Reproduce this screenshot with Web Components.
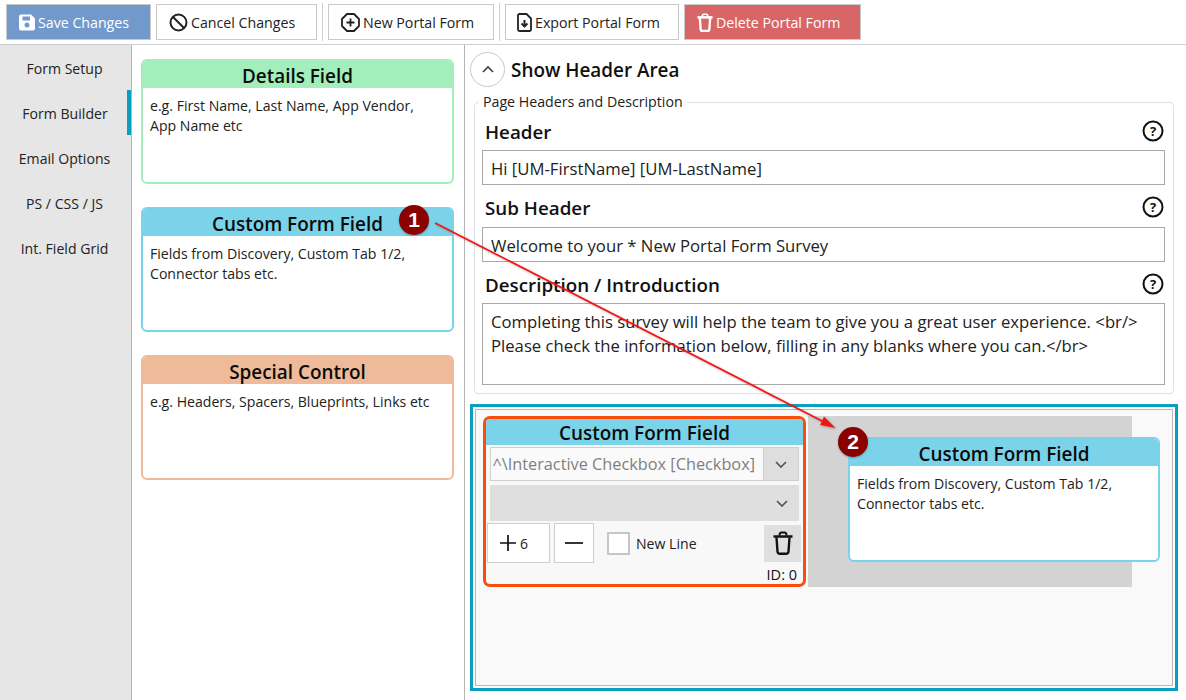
<!DOCTYPE html>
<html><head><meta charset="utf-8">
<style>
html,body{margin:0;padding:0;background:#fff}
body{width:1186px;height:700px;overflow:hidden;font-family:"Open Sans","Noto Sans",sans-serif;color:#111}
</style></head><body>
<app-root></app-root>
<script>
const trash=(w,h,s)=>`<svg width="${w}" height="${h}" viewBox="0 0 20 24" fill="none" stroke="currentColor" stroke-width="${s}"><path d="M.5 5.500h19" stroke-width="${s+.2}"/><path d="M6.500 4.500c0-2 1-3 2-3h3c1 0 2 1 2 3" stroke-width="2"/><path d="M3.500 6.500l1 14c.1 1.500 1 2.300 2.500 2.300h6c1.500 0 2.400-.8 2.500-2.300l1-14"/></svg>`;
const ICONS={
save:'<svg width="16" height="17" viewBox="0 0 16 17"><path fill="currentColor" fill-rule="evenodd" d="M2 .5h10l4 4v10a2 2 0 0 1-2 2H2a2 2 0 0 1-2-2v-12a2 2 0 0 1 2-2zm1.500 2v4h7.500v-4zm4.500 6a2.500 2.500 0 1 0 0 5 2.500 2.500 0 0 0 0-5z"/></svg>',
cancel:'<svg width="19" height="19" viewBox="0 0 19 19" fill="none" stroke="currentColor" stroke-width="2"><circle cx="9.500" cy="9.500" r="8"/><path d="M4 4l11 11"/></svg>',
plus:'<svg width="19" height="19" viewBox="0 0 19 19" fill="none" stroke="currentColor" stroke-width="1.800"><path d="M6 1h7L18 6v7L13 18H6L1 13V6z" stroke-linejoin="round"/><path d="M9.500 5.500v8M5.500 9.500h8"/></svg>',
exp:'<svg width="15" height="19" viewBox="0 0 15 19" fill="none" stroke="currentColor" stroke-width="1.800"><path d="M9.500 1H2.500A1.500 1.500 0 0 0 1 2.500v14A1.500 1.500 0 0 0 2.500 18h10a1.500 1.500 0 0 0 1.500-1.500V5.500z" stroke-linejoin="round"/><path d="M7.500 7v6.500" stroke-width="2"/><path d="M4.500 10.500l3 3 3-3" stroke-width="1.800"/></svg>',
trash:trash(16,19,3),
chev:'<svg width="14" height="9" viewBox="0 0 14 9" fill="none" stroke="currentColor" stroke-width="1.700"><path d="M2 2l5 5 5-5"/></svg>'
};
function def(name,css,html){
  customElements.define(name,class extends HTMLElement{
    constructor(){super();const r=this.attachShadow({mode:'open'});r.innerHTML='<style>'+css+'</style>'+(typeof html==='function'?html(this):html);}
  });
}
def('tool-btn',`
:host{display:flex;align-items:center;justify-content:flex-start;gap:3px;height:36px;margin-top:1px;box-sizing:border-box;padding:1px 0 0 12px;border:1px solid #c9c9c9;background:#fff;font-size:14.2px;color:#222}
:host([kind=save]){background:#7299cc;color:#fff}
:host([kind=del]){background:#d96666;color:#fff}
svg{display:block;flex:none}
`,el=>ICONS[el.getAttribute('icon')]+'<span><slot></slot></span>');
def('tool-sep',`:host{display:block;width:1px;height:38px;background:#d0d0d0}`,'');
def('tool-bar',`:host{display:flex;align-items:flex-start;gap:5px;height:45px;box-sizing:border-box;padding:3px 0 0 6px;border-bottom:1px solid #cfcfcf;flex:none}`,'<slot></slot>');
def('side-tab',`
:host{display:flex;align-items:center;justify-content:center;height:45px;font-size:14.100px;color:#222;box-sizing:border-box;padding:1px 2px 0 0}
:host([active]){border-right:4px solid #0a9fc0;padding:1px 0 0 3px}
`,'<slot></slot>');
def('side-bar',`:host{display:block;width:131px;flex:none;background:#e6e6e6;box-sizing:border-box}`,'<slot></slot>');
def('field-card',`
:host{display:flex;flex-direction:column;box-sizing:border-box;width:var(--w,313px);height:125px;border:2px solid var(--c);border-radius:6px;background:#fff;flex:none}
.h{background:var(--c);height:27px;box-sizing:border-box;padding-top:3px;flex:none;display:flex;align-items:center;justify-content:center;font-size:18.900px;font-weight:600;color:#0b0b0b;line-height:1;border-radius:4px 4px 0 0}
.b{padding:8px 16px 8px 7px;font-size:14.100px;line-height:20px;color:#222}
`,el=>`<div class="h">${el.getAttribute('title')}</div><div class="b"><slot></slot></div>`);
def('field-list',`:host{display:flex;flex-direction:column;gap:23px;width:334px;flex:none;box-sizing:border-box;padding:14px 0 0 9px;border-left:1px solid #b5b5b5;border-right:1px solid #b5b5b5;background:#fff}`,'<slot></slot>');
def('help-icon',`:host{display:block;width:22px;height:22px;margin-top:-2px}svg{display:block}`,'<svg width="22" height="22" viewBox="0 0 22 22"><circle cx="11" cy="11" r="9.500" fill="none" stroke="#111" stroke-width="2"/><text x="11" y="15.500" text-anchor="middle" font-family="Open Sans" font-size="13" font-weight="700" fill="#111">?</text></svg>');
def('form-row',`
:host{display:block}
.l{display:flex;justify-content:space-between;align-items:center;height:22px;padding:0 1px 0 3px;font-size:18.800px;font-weight:600;color:#111;line-height:1}
.i{box-sizing:border-box;margin-top:var(--gap,7px);height:var(--ih,35px);border:1px solid #a9a9a9;padding:6px 8px;font-size:16.700px;line-height:24px;color:#222;white-space:nowrap;background:#fff}
`,el=>`<div class="l"><span>${el.getAttribute('label')}</span><help-icon></help-icon></div><div class="i"><slot></slot></div>`);
def('group-box',`
:host{display:block;box-sizing:border-box;margin:15px 0 0 9px;width:700px;height:292px;border:1px solid #dbe1e8;border-radius:4px;position:relative;padding:18px 8px 0 7px}
.t{position:absolute;left:4px;top:-11px;background:#fff;padding:0 4px;font-size:14.200px;line-height:20px;color:#222}
`,el=>`<div class="t">${el.getAttribute('legend')}</div><slot></slot>`);
def('show-head',`
:host{display:flex;align-items:center;gap:6px;height:35px;margin:7px 0 0 5px;font-size:18.900px;font-weight:600;color:#111}
.c{width:35px;height:35px;box-sizing:border-box;border:1px solid #c8c8c8;border-radius:50%;display:flex;align-items:center;justify-content:center;color:#444;transform:scaleY(-1)}
`,`<div class="c">${ICONS.chev}</div><span><slot></slot></span>`);
def('combo-row',`
:host{display:flex;box-sizing:border-box;height:34px;margin:2px 4px 0 4px;border:1px solid #cfcfcf;background:#fafafa;font-size:16.300px;color:#808080}
.w{flex:1;min-width:0;overflow:hidden;display:flex;justify-content:flex-end;padding-right:8px}
.t{white-space:nowrap;line-height:33px;flex:none}
.b{width:34px;flex:none;background:#dedede;display:flex;align-items:center;justify-content:center;border-left:1px solid #cfcfcf;color:#555}
`,`<div class="w"><div class="t"><slot></slot></div></div><div class="b">${ICONS.chev}</div>`);
def('blank-combo',`
:host{display:flex;align-items:center;justify-content:flex-end;box-sizing:border-box;height:36px;margin:4px 4px 0 4px;background:#dfdfdf;padding-right:10px;color:#555}
`,ICONS.chev);
def('mini-btn',`
:host{display:flex;align-items:center;box-sizing:border-box;height:40px;border:1px solid #cfcfcf;background:#fff;font-size:14px;color:#222;justify-content:center;gap:3px}
:host([sign="+"]){justify-content:flex-start;padding-left:11px}
`,el=>(el.getAttribute('sign')==='+'?'<svg width="18" height="18" viewBox="0 0 18 18"><path d="M9 1v16M1 9h16" stroke="#111" stroke-width="1.700"/></svg>':'<svg width="18" height="18" viewBox="0 0 18 18"><path d="M0 9h18" stroke="#111" stroke-width="1.700"/></svg>')+'<slot></slot>');
def('check-line',`
:host{display:flex;align-items:center;gap:6px;font-size:14.100px;color:#222}
.x{width:23px;height:23px;box-sizing:border-box;border:2px solid #c6c6c6;background:#fff}
`,'<div class="x"></div><slot></slot>');
def('drop-card',`
:host{display:block;box-sizing:border-box;width:323px;height:171px;border:3px solid #fa4c0a;border-radius:7px;background:#f8f8f8;overflow:hidden;flex:none}
.h{background:#7bd3ea;height:26px;box-sizing:border-box;padding-top:2px;display:flex;align-items:center;justify-content:center;font-size:18.900px;font-weight:600;color:#0b0b0b;line-height:1}
.r{display:flex;align-items:center;margin:2px 0 0 1px;height:40px}
.r mini-btn:first-child{width:63px}
.r mini-btn:nth-child(2){width:40px;margin-left:4px}
check-line{margin-left:13px}
.tr{margin-left:auto;width:37px;height:37px;background:#dfdfdf;display:flex;align-items:center;justify-content:center;color:#111;margin-right:2px}
.id{text-align:right;font-size:14.500px;line-height:18px;padding:3px 6px 0 0;color:#111}
`,`<div class="h">Custom Form Field</div>
<combo-row>^\\Interactive Checkbox [Checkbox]</combo-row>
<blank-combo></blank-combo>
<div class="r"><mini-btn sign="+">6</mini-btn><mini-btn sign="-"></mini-btn><check-line>New Line</check-line><div class="tr">${trash(20,24,2.4)}</div></div>
<div class="id">ID: 0</div>`);
def('drop-zone',`
:host{display:block;box-sizing:border-box;margin:10px 0 0 5px;width:708px;height:287px;border:3px solid #0a9fc0;background:#fff;padding:2px}
.in{box-sizing:border-box;height:100%;border:1px solid #b8b8b8;background:#f9f9f9;padding:6px 0 0 7px;display:flex;gap:2px;align-items:flex-start;position:relative}
.ph{width:324px;height:171px;background:#d3d3d3;flex:none}
field-card{position:absolute;left:372px;top:27px;--w:312px}
`,`<div class="in"><drop-card></drop-card><div class="ph"></div><field-card title="Custom Form Field" style="--c:#7bd3ea">Fields from Discovery, Custom Tab 1/2, Connector tabs etc.</field-card></div>`);
def('num-badge',`
:host{position:absolute;width:30px;height:30px;border-radius:50%;background:#8b0000;color:#fff;font:700 21px/30px "Liberation Sans",sans-serif;text-align:center;box-shadow:0 1px 2px rgba(0,0,0,.3)}
`,'<slot></slot>');
def('app-root',`
:host{display:flex;flex-direction:column;width:1186px;height:700px;position:relative;overflow:hidden}
.m{display:flex;flex:1;min-height:0}
.c{flex:1;min-width:0}
tool-btn:nth-child(1){width:145px}
tool-btn:nth-child(2){width:161px}
tool-btn:nth-child(4){width:166px}
tool-btn:nth-child(6){width:174px;padding-left:11px}
tool-btn:nth-child(7){width:177px}
svg.a{position:absolute;left:0;top:0;pointer-events:none}
.b1{left:399px;top:205px}
.b2{left:838px;top:427px}
`,`<tool-bar>
<tool-btn kind="save" icon="save">Save Changes</tool-btn>
<tool-btn icon="cancel">Cancel Changes</tool-btn>
<tool-sep></tool-sep>
<tool-btn icon="plus">New Portal Form</tool-btn>
<tool-sep></tool-sep>
<tool-btn icon="exp">Export Portal Form</tool-btn>
<tool-btn kind="del" icon="trash">Delete Portal Form</tool-btn>
</tool-bar>
<div class="m">
<side-bar>
<side-tab>Form Setup</side-tab><side-tab active>Form Builder</side-tab><side-tab>Email Options</side-tab><side-tab>PS / CSS / JS</side-tab><side-tab>Int. Field Grid</side-tab>
</side-bar>
<field-list>
<field-card title="Details Field" style="--c:#a2efbc">e.g. First Name, Last Name, App Vendor, App Name etc</field-card>
<field-card title="Custom Form Field" style="--c:#7bd3ea">Fields from Discovery, Custom Tab 1/2, Connector tabs etc.</field-card>
<field-card title="Special Control" style="--c:#efba9a">e.g. Headers, Spacers, Blueprints, Links etc</field-card>
</field-list>
<div class="c">
<show-head>Show Header Area</show-head>
<group-box legend="Page Headers and Description">
<form-row label="Header">Hi [UM-FirstName] [UM-LastName]</form-row>
<form-row label="Sub Header" style="margin-top:12px;--gap:8px">Welcome to your * New Portal Form Survey</form-row>
<form-row label="Description / Introduction" style="margin-top:12px;--ih:82px">Completing this survey will help the team to give you a great user experience. &lt;br/&gt;<br>Please check the information below, filling in any blanks where you can.&lt;/br&gt;</form-row>
</group-box>
<drop-zone></drop-zone>
</div>
</div>
<svg class="a" width="1186" height="700"><defs><filter id="s" x="-5%" y="-5%" width="110%" height="110%"><feDropShadow dx="1" dy="1" stdDeviation="1" flood-color="#000" flood-opacity=".3"/></filter></defs>
<g filter="url(#s)"><path d="M435 223L826 423" stroke="#f01818" stroke-width="1.700" fill="none"/><path d="M835.500 428L820 425L824 416.500z" fill="#f01818"/></g></svg>
<num-badge class="b1">1</num-badge><num-badge class="b2">2</num-badge>`);
</script>
</body></html>
